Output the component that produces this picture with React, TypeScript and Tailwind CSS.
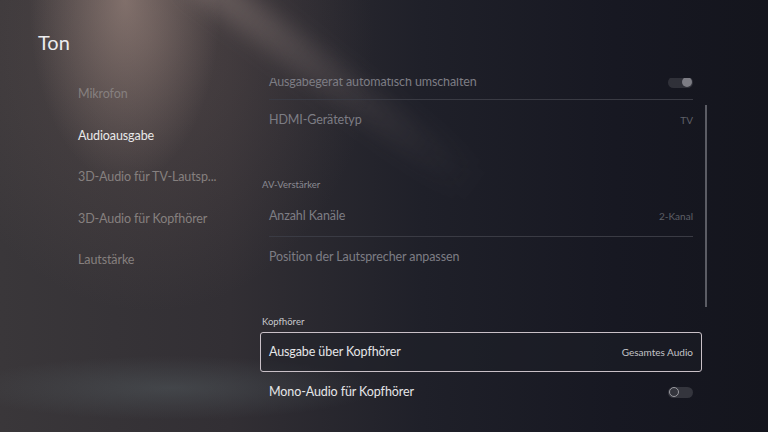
import React from "react";

const navItems = [
  { label: "Mikrofon", active: false },
  { label: "Audioausgabe", active: true },
  { label: "3D-Audio für TV-Lautsp...", active: false },
  { label: "3D-Audio für Kopfhörer", active: false },
  { label: "Lautstärke", active: false },
];

function Toggle({ on, dim }: { on: boolean; dim?: boolean }) {
  return (
    <div
      className={`flex h-[11px] w-[25px] items-center rounded-full px-[1px] ${
        on ? "justify-end bg-[#3b3c44]" : "justify-start bg-[#34353d]"
      } ${dim ? "opacity-70" : ""}`}
    >
      {on ? (
        <div className="h-[10px] w-[10px] rounded-full bg-[#a9a9b0]" />
      ) : (
        <div className="h-[10px] w-[10px] rounded-full border border-[#9a9aa0]" />
      )}
    </div>
  );
}

function Row({
  label,
  value,
  dim,
  toggle,
  selected,
  height = "h-[40px]",
}: {
  label: string;
  value?: string;
  dim?: boolean;
  toggle?: "on" | "off";
  selected?: boolean;
  height?: string;
}) {
  return (
    <div
      className={`flex ${height} items-center justify-between rounded-[3px] px-[8px] ${
        selected ? "border border-[#c9c0c7] bg-[#1f2028]/40" : "border border-transparent"
      }`}
    >
      <span className={`text-[12.5px] tracking-[-0.1px] ${dim ? "text-[#7d7d84]" : "text-[#e6e6e8]"}`}>{label}</span>
      {value ? (
        <span className={`text-[10px] ${dim ? "text-[#5f6068]" : "text-[#c4c4c8]"}`}>{value}</span>
      ) : null}
      {toggle ? <Toggle on={toggle === "on"} dim={dim} /> : null}
    </div>
  );
}

export default function App() {
  return (
    <div className="relative h-[432px] w-[768px] overflow-hidden bg-[radial-gradient(ellipse_120px_230px_at_125px_0px,rgba(175,150,140,0.55),transparent_80%),radial-gradient(ellipse_280px_340px_at_150px_40px,rgba(120,100,95,0.35),transparent_80%),radial-gradient(ellipse_260px_40px_at_170px_388px,rgba(95,108,112,0.35),transparent_80%),linear-gradient(90deg,#3a373a_0%,#322f34_30%,#1f2029_55%,#171822_80%,#14151d_100%)] font-['Lato',sans-serif] text-[#e6e6e8]">
      {/* diagonal light beam */}
      <div className="pointer-events-none absolute left-[160px] top-[64px] h-[34px] w-[350px] rotate-[37deg] bg-[linear-gradient(90deg,rgba(175,155,148,0.34),rgba(140,125,122,0.16)_55%,transparent)] blur-[10px]" />

      <div className="relative flex h-full flex-col">
        <h1 className="pl-[38px] pt-[29px] text-[20px] font-normal leading-[26px] text-[#ececee]">Ton</h1>

        <div className="mt-[19px] flex flex-1">
          {/* left nav */}
          <nav className="flex w-[260px] flex-col pl-[78px]">
            {navItems.map((item) => (
              <div key={item.label} className="flex h-[41.5px] items-center">
                <span
                  className={`text-[12.5px] tracking-[-0.1px] ${item.active ? "text-[#e9e9ea]" : "text-[#86807f]"}`}
                >
                  {item.label}
                </span>
              </div>
            ))}
          </nav>

          {/* right panel */}
          <div className="flex w-[450px] flex-col pt-[4px]">
            <div className="flex">
              <div className="h-[232px] w-[442px] overflow-hidden">
                <div className="mt-[-13px]">
                  <Row label="Ausgabegerät automatisch umschalten" dim toggle="on" height="h-[34px]" />
                  <div className="mx-[9px] h-px bg-[#3a3b44]" />
                  <Row label="HDMI-Gerätetyp" value="TV" dim />
                  <div className="h-[39px]" />
                  <div className="pl-[2px] text-[9.5px] leading-[12px] text-[#8a8a92]">AV-Verstärker</div>
                  <div className="mt-[5px]">
                    <Row label="Anzahl Kanäle" value="2-Kanal" dim />
                  </div>
                  <div className="mx-[9px] h-px bg-[#3a3b44]" />
                  <Row label="Position der Lautsprecher anpassen" dim />
                </div>
              </div>
              <div className="ml-[3px] mt-[27px] h-[202px] w-[2px] bg-[#5b5c64]" />
            </div>

            <div className="mt-[6px] w-[442px]">
              <div className="pl-[2px] text-[9.5px] leading-[12px] text-[#c8c8cc]">Kopfhörer</div>
              <div className="mt-[4px]">
                <Row label="Ausgabe über Kopfhörer" value="Gesamtes Audio" selected />
              </div>
              <Row label="Mono-Audio für Kopfhörer" toggle="off" />
            </div>
          </div>
        </div>
      </div>
    </div>
  );
}
